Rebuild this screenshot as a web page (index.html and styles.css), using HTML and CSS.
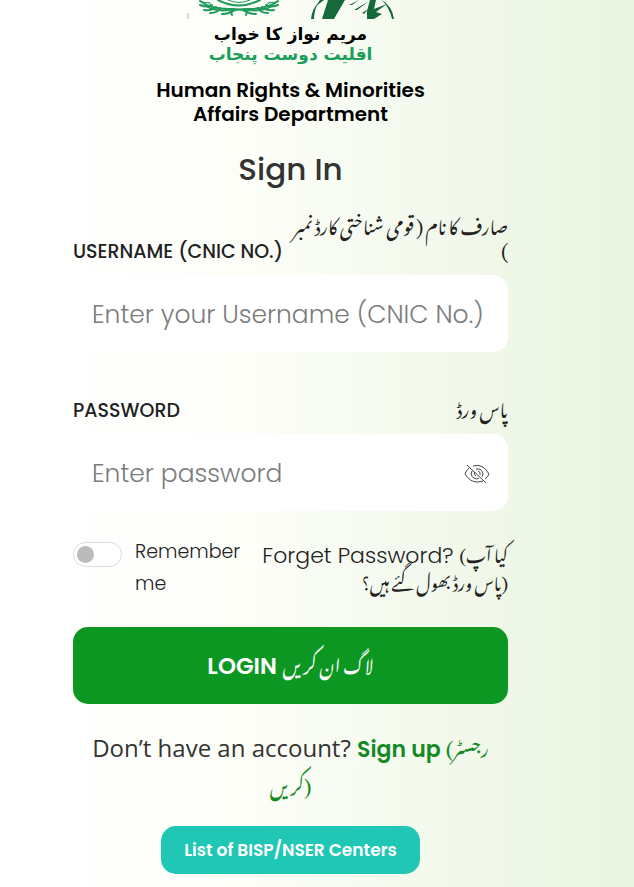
FILE: index.html
```html
<!DOCTYPE html>
<html lang="en">
<head>
    <meta charset="UTF-8">
    <meta name="viewport" content="width=device-width, initial-scale=1.0">
    <title>Sign In</title>
    <link rel="stylesheet" href="styles.css">
</head>
<body>

    <main class="login">

        <header class="brand">
            <svg class="brand-logo" viewBox="0 0 210 20" aria-hidden="true">
                <path d="M2 13v6" stroke="#b5b8b5" stroke-width="1"/>
                <g fill="none" stroke="#219a5b" stroke-width="2" stroke-linecap="round">
                    <path d="M32 0Q53 11 74 0"/>
                    <path d="M42 0Q53 5 64 0" stroke-width="1"/>
                    <path d="M14 1Q24 9 44 9T60 15"/>
                    <path d="M92 1Q82 9 62 9T46 15"/>
                    <path d="M20 6Q32 13 48 9M86 6Q74 13 58 9"/>
                    <path d="M14 5q8 3 12 0M18 10q8 1 12-3M24 13q8 0 10-5M36 14q8 0 10-4M92 5q-8 3-12 0M88 10q-8 1-12-3M82 13q-8 0-10-5M70 14q-8 0-10-4"/>
                    <path d="M15 2l9 1M91 2l-9 1M22 2l4 4M84 2l-4 4" stroke-width="1"/>
                </g>
                <g fill="#17683a">
                    <path d="M142 0h17l-11 19h-12z"/>
                    <path d="M125 19q1-10 7-16-4 8-4 16zM138 0l-9 7 5-7z"/>
                    <path d="M184 0h6l-2 9 13-5-11 8 6 2-8 5h-7v-8z"/>
                    <path d="M196 0q10 6 12 19h-2q-2-10-10-19zM168 10l15-9-12 9zM176 13l6-4-4 5zM163 5l10-5-7 5z"/>
                </g>
            </svg>
            <div class="slogan" lang="ur" dir="rtl">
                <span>مریم نواز کا خواب</span>
                <span class="slogan-green">اقلیت دوست پنجاب</span>
            </div>
            <p class="department">Human Rights &amp; Minorities<br>Affairs Department</p>
        </header>

        <h1>Sign In</h1>

        <form>
            <div class="field">
                <label for="username">
                    <span class="label-en">USERNAME (CNIC NO.)</span>
                    <span class="label-ur" lang="ur" dir="rtl">صارف کا نام ( قومی شناختی کارڈ نمبر<br>)</span>
                </label>
                <input type="text" id="username" placeholder="Enter your Username (CNIC No.)">
            </div>

            <div class="field">
                <label for="password">
                    <span class="label-en">PASSWORD</span>
                    <span class="label-ur" lang="ur" dir="rtl">پاس ورڈ</span>
                </label>
                <div class="password-box">
                    <input type="password" id="password" placeholder="Enter password">
                    <button type="button" class="toggle-eye" aria-label="Show password">
                        <svg viewBox="0 0 26 22" fill="none" stroke="#444" stroke-width="1">
                            <path d="M5 5Q2 8 1 11q5 8 12 8 3 0 6-1M9 3q10-3 16 8-1 3-4 5"/>
                            <path d="M8 8q-2 5 2 7 3 2 5 0M12 6q6-1 7 5l-1 3M11 9q-2 3 1 4M14 8q3 1 2 4"/>
                            <path d="M3 2l19 18"/>
                        </svg>
                    </button>
                </div>
            </div>

            <div class="options">
                <label class="remember">
                    <input type="checkbox" class="switch">
                    <span>Remember me</span>
                </label>
                <a href="#" class="forget">Forget Password? <span class="urdu" lang="ur">(کیا آپ<br>پاس ورڈ بھول گئے ہیں؟)</span></a>
            </div>

            <button type="submit" class="btn-login">LOGIN <span class="urdu" lang="ur">لاگ ان کریں</span></button>
        </form>

        <p class="signup">Don’t have an account? <a href="#">Sign up <span class="urdu" lang="ur">(رجسٹر<br>کریں)</span></a></p>

        <a href="#" class="btn-centers">List of BISP/NSER Centers</a>

    </main>

</body>
</html>
```

FILE: styles.css
```css
* {
    box-sizing: border-box;
}
body {
    margin: 0;
    font-family: Poppins, Inter, "DejaVu Sans", sans-serif;
    color: #222;
    background: linear-gradient(90deg, #ffffff 8%, #fcfef7 40%, #f1f8ea 75%, #e8f5df 100%);
    min-height: 100vh;
}
.login {
    margin: 0 126px 0 73px;
    display: flex;
    flex-direction: column;
    align-items: center;
    padding-bottom: 12px;
}
.brand {
    display: flex;
    flex-direction: column;
    align-items: center;
    text-align: center;
}
.brand-logo {
    width: 210px;
    height: 20px;
}
.slogan {
    display: flex;
    flex-direction: column;
    font-family: "DejaVu Sans", sans-serif;
    font-size: 17px;
    font-weight: bold;
    line-height: 20px;
    color: #000;
    padding-top: 4px;
}
.slogan-green {
    color: #1c9e5a;
}
.department {
    margin: 14px 0 0;
    font-size: 20px;
    font-weight: 600;
    line-height: 24px;
    color: #000;
}
h1 {
    margin: 23px 0 23px;
    font-size: 31px;
    font-weight: 500;
    line-height: 40px;
    color: #333;
}
form {
    width: 100%;
}
.field {
    margin-bottom: 43px;
}
.field label {
    display: flex;
    justify-content: space-between;
    align-items: flex-end;
    padding-bottom: 11px;
}
.label-en {
    font-size: 19px;
    font-weight: 500;
    line-height: 24px;
    white-space: nowrap;
}
.label-ur {
    font-family: "Jameel Noori Nastaleeq", "Noto Nastaliq Urdu", "DejaVu Sans", sans-serif;
    font-size: 18px;
    line-height: 24px;
    padding-bottom: 4px;
    white-space: nowrap;
}
.field input {
    display: block;
    width: 100%;
    height: 77px;
    padding: 2px 19px 0;
    border: 0;
    border-radius: 15px;
    background: #fff;
    font-family: inherit;
    font-size: 25px;
    font-weight: 300;
    color: #222;
}
.field input::placeholder {
    color: #7c7c7c;
    opacity: 1;
}
.password-box {
    display: flex;
    align-items: center;
    background: #fff;
    border-radius: 15px;
    padding-right: 18px;
}
.toggle-eye {
    padding: 2px 0 0;
    border: 0;
    background: none;
}
.toggle-eye svg {
    display: block;
    width: 26px;
    height: 22px;
}
.options {
    display: flex;
    justify-content: space-between;
    margin: -18px 0 27px;
}
.remember {
    display: flex;
    gap: 13px;
    width: 180px;
    font-size: 19px;
    font-weight: 300;
    line-height: 32px;
}
.switch {
    appearance: none;
    flex: none;
    width: 49px;
    height: 25px;
    margin: 6px 0 0;
    padding: 3px;
    border: 1px solid #ddd;
    border-radius: 13px;
    background: #fff;
}
.switch::before {
    content: "";
    display: block;
    width: 17px;
    height: 17px;
    border-radius: 50%;
    background: #bbb;
}
.forget {
    font-size: 22px;
    font-weight: 300;
    line-height: 28px;
    padding-top: 6px;
    color: #222;
    text-align: right;
    text-decoration: none;
    white-space: nowrap;
}
.urdu {
    font-family: "Jameel Noori Nastaleeq", "Noto Nastaliq Urdu", "DejaVu Sans", sans-serif;
    font-size: 17px;
    font-weight: 400;
    line-height: 20px;
}
.btn-login {
    display: block;
    width: 100%;
    height: 77px;
    border: 0;
    border-radius: 15px;
    background: #0c9722;
    color: #fff;
    font-family: inherit;
    font-size: 23px;
    font-weight: 600;
}
.btn-login .urdu,
.signup .urdu {
    font-size: 18px;
    font-weight: 500;
}
.signup {
    margin: 26px 0 20px;
    font-family: "Open Sans", sans-serif;
    font-size: 24px;
    line-height: 36px;
    text-align: center;
    color: #333;
}
.signup a {
    font-family: Poppins, Inter, sans-serif;
    font-size: 22px;
    font-weight: 600;
    color: #148a25;
    text-decoration: none;
}
.btn-centers {
    padding: 12px 23px;
    border-radius: 15px;
    background: #20c7b5;
    color: #fff;
    font-size: 17px;
    font-weight: 600;
    line-height: 24px;
    text-decoration: none;
}
```
